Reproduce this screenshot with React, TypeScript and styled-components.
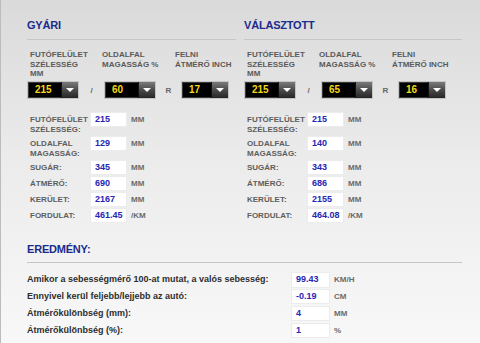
import styled, { createGlobalStyle } from "styled-components";

const GlobalStyle = createGlobalStyle`
	html, body {
		margin: 0;
		padding: 0;
	}
	body {
		font-family: "Liberation Sans", Arial, sans-serif;
	}
`;

type Tire = {
	title: string;
	width: string;
	profile: string;
	rim: string;
	rows: { label: string[]; value: string; unit: string }[];
};

const tires: Tire[] = [
	{
		title: "GYÁRI",
		width: "215",
		profile: "60",
		rim: "17",
		rows: [
			{ label: ["FUTÓFELÜLET", "SZÉLESSÉG:"], value: "215", unit: "MM" },
			{ label: ["OLDALFAL", "MAGASSÁG:"], value: "129", unit: "MM" },
			{ label: ["SUGÁR:"], value: "345", unit: "MM" },
			{ label: ["ÁTMÉRŐ:"], value: "690", unit: "MM" },
			{ label: ["KERÜLET:"], value: "2167", unit: "MM" },
			{ label: ["FORDULAT:"], value: "461.45", unit: "/KM" },
		],
	},
	{
		title: "VÁLASZTOTT",
		width: "215",
		profile: "65",
		rim: "16",
		rows: [
			{ label: ["FUTÓFELÜLET", "SZÉLESSÉG:"], value: "215", unit: "MM" },
			{ label: ["OLDALFAL", "MAGASSÁG:"], value: "140", unit: "MM" },
			{ label: ["SUGÁR:"], value: "343", unit: "MM" },
			{ label: ["ÁTMÉRŐ:"], value: "686", unit: "MM" },
			{ label: ["KERÜLET:"], value: "2155", unit: "MM" },
			{ label: ["FORDULAT:"], value: "464.08", unit: "/KM" },
		],
	},
];

const results = [
	{ label: "Amikor a sebességmérő 100-at mutat, a valós sebesség:", value: "99.43", unit: "KM/H" },
	{ label: "Ennyivel kerül feljebb/lejjebb az autó:", value: "-0.19", unit: "CM" },
	{ label: "Átmérőkülönbség (mm):", value: "4", unit: "MM" },
	{ label: "Átmérőkülönbség (%):", value: "1", unit: "%" },
];

const Select = ({ value, width }: { value: string; width: number }) => (
	<SelectBox $width={width}>
		<SelectValue>{value}</SelectValue>
		<SelectButton>
			<Arrow />
		</SelectButton>
	</SelectBox>
);

const TireColumn = ({ tire }: { tire: Tire }) => (
	<Column>
		<Title>{tire.title}</Title>
		<LabelRow>
			<SizeLabel>FUTÓFELÜLET<br />SZÉLESSÉG<br />MM</SizeLabel>
			<SizeLabel>OLDALFAL<br />MAGASSÁG %</SizeLabel>
			<SizeLabel>FELNI<br />ÁTMÉRŐ INCH</SizeLabel>
		</LabelRow>
		<SelectRow>
			<Select value={tire.width} width={52} />
			<Separator>/</Separator>
			<Select value={tire.profile} width={52} />
			<Separator>R</Separator>
			<Select value={tire.rim} width={48} />
		</SelectRow>
		<DetailList>
			{tire.rows.map((row) => (
				<DetailRow key={row.label.join(" ")}>
					<DetailLabel>
						{row.label.map((line) => (
							<div key={line}>{line}</div>
						))}
					</DetailLabel>
					<ValueBox>{row.value}</ValueBox>
					<Unit>{row.unit}</Unit>
				</DetailRow>
			))}
		</DetailList>
	</Column>
);

const App = () => {
	return (
		<>
			<GlobalStyle />
			<Page>
				<Top>
					{tires.map((tire) => (
						<TireColumn key={tire.title} tire={tire} />
					))}
				</Top>
				<ResultTitle>EREDMÉNY:</ResultTitle>
				<ResultList>
					{results.map((r) => (
						<ResultRow key={r.label}>
							<ResultLabel>{r.label}</ResultLabel>
							<ResultBox>{r.value}</ResultBox>
							<Unit>{r.unit}</Unit>
						</ResultRow>
					))}
				</ResultList>
			</Page>
		</>
	);
};

export default App;

const Page = styled.div`
	box-sizing: border-box;
	width: 480px;
	height: 343px;
	padding: 0 18px 0 26px;
	border-left: 1px solid #bcbcbc;
	background: linear-gradient(180deg, #dadada 0%, #ebebeb 45%, #f8f8f8 100%);
	overflow: hidden;
`;

const Top = styled.div`
	display: grid;
	grid-template-columns: 209px 218px;
	column-gap: 8px;
`;

const Column = styled.div`
	display: flex;
	flex-direction: column;
`;

const Title = styled.div`
	padding-top: 19px;
	padding-bottom: 7px;
	border-bottom: 1px solid #c6c6c6;
	font-size: 11px;
	line-height: 13px;
	font-weight: bold;
	letter-spacing: -0.2px;
	color: #1b2b8c;
`;

const LabelRow = styled.div`
	display: grid;
	grid-template-columns: 72px 73px auto;
	padding-left: 3px;
	margin-top: 10px;
`;

const SizeLabel = styled.div`
	font-size: 8px;
	line-height: 9.7px;
	font-weight: bold;
	color: #5a5a5a;
`;

const SelectRow = styled.div`
	display: flex;
	align-items: center;
	margin-top: 2px;
`;

const SelectBox = styled.div<{ $width: number }>`
	box-sizing: border-box;
	display: flex;
	width: ${(p) => p.$width}px;
	height: 18px;
	background: #000;
	border: 1px solid #c4c4c4;
	box-shadow: inset 0 0 0 1px #3a3a3a;
`;

const SelectValue = styled.div`
	flex: 1;
	padding-left: 7px;
	font-size: 10px;
	line-height: 16px;
	font-weight: bold;
	color: #f4d81c;
`;

const SelectButton = styled.div`
	width: 16px;
	display: flex;
	align-items: center;
	justify-content: center;
	background: linear-gradient(180deg, #7a7a7a 0%, #4a4a4a 50%, #262626 100%);
	border-left: 1px solid #111;
`;

const Arrow = styled.div`
	width: 0;
	height: 0;
	border-left: 4px solid transparent;
	border-right: 4px solid transparent;
	border-top: 4px solid #fff;
`;

const Separator = styled.div`
	width: 25px;
	text-align: center;
	font-size: 8px;
	font-weight: bold;
	color: #666;
`;

const DetailList = styled.div`
	display: flex;
	flex-direction: column;
	gap: 1px;
	margin-top: 13px;
`;

const DetailRow = styled.div`
	display: grid;
	grid-template-columns: 56px 37px auto;
	column-gap: 4px;
	align-items: start;
	padding-left: 3px;
`;

const DetailLabel = styled.div`
	padding-top: 3px;
	font-size: 8px;
	line-height: 10px;
	font-weight: bold;
	color: #5e5e5e;
	white-space: nowrap;
`;

const ValueBox = styled.div`
	box-sizing: border-box;
	height: 15px;
	padding-left: 4px;
	background: #fff;
	border: 1px solid #ececec;
	font-size: 9px;
	line-height: 13px;
	font-weight: bold;
	color: #2626b4;
`;

const Unit = styled.div`
	padding-top: 3px;
	font-size: 8px;
	line-height: 10px;
	font-weight: bold;
	color: #6a6a6a;
`;

const ResultTitle = styled(Title)`
	padding-top: 20px;
	padding-bottom: 6px;
`;

const ResultList = styled.div`
	display: flex;
	flex-direction: column;
	gap: 1.3px;
	margin-top: 9px;
`;

const ResultRow = styled.div`
	display: grid;
	grid-template-columns: 260px 39px auto;
	column-gap: 4px;
	align-items: start;
`;

const ResultLabel = styled.div`
	padding-top: 1px;
	font-size: 9px;
	line-height: 12px;
	font-weight: bold;
	color: #2e2e2e;
	white-space: nowrap;
`;

const ResultBox = styled(ValueBox)`
	height: 15.5px;
`;
